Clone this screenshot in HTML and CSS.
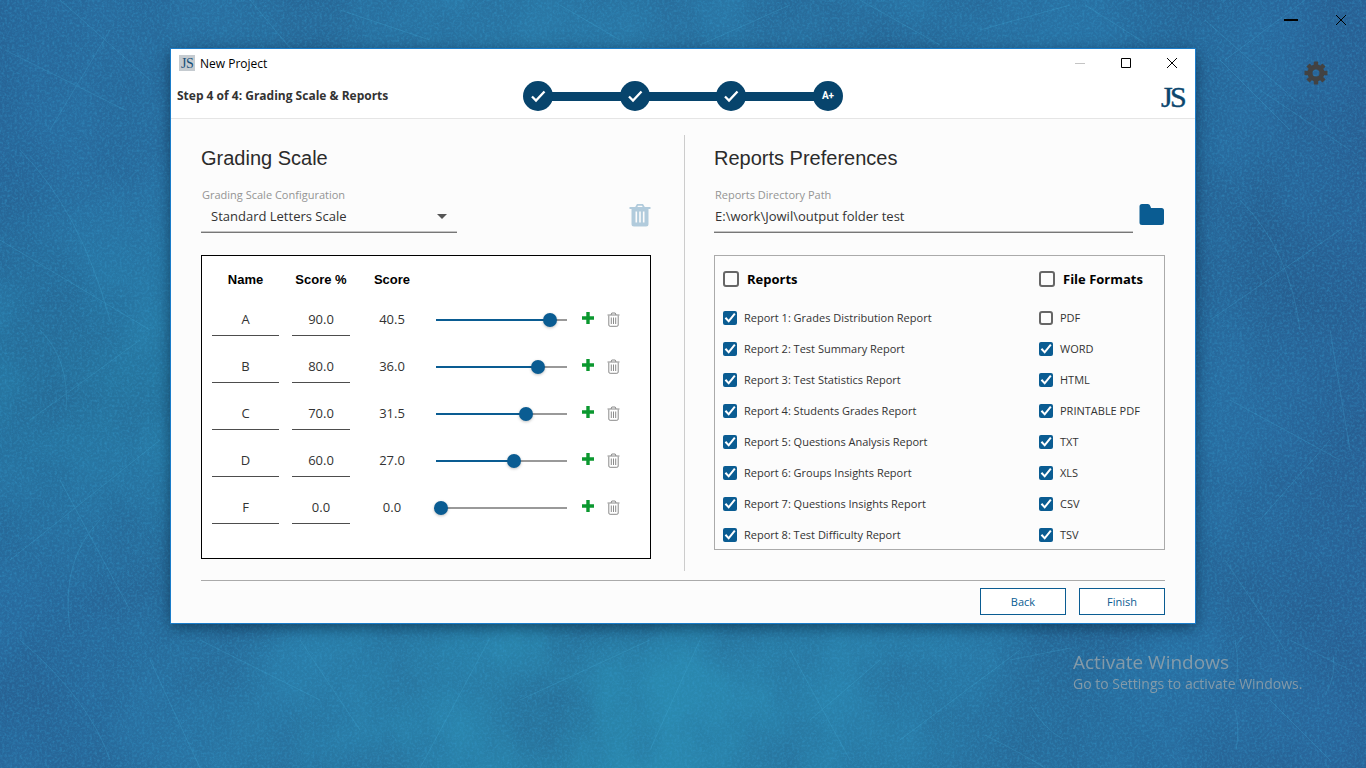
FILE: index.html
```html
<!DOCTYPE html>
<html lang="en">
<head>
<meta charset="utf-8">
<title>New Project</title>
<link rel="stylesheet" href="styles.css">
</head>
<body>
<svg class="sprites" aria-hidden="true">
  <symbol id="tick" viewBox="0 0 30 30"><path d="M9 15.500l4 4 8.500-9" fill="none" stroke="#fff" stroke-width="2.300"/></symbol>
  <symbol id="bin" viewBox="0 0 13 15"><path d="M.5 3h12M4 3l.8-2h3.400l.8 2M1.800 3.500v9.500q0 1.300 1.300 1.300h6.800q1.300 0 1.300-1.300v-9.500M4.300 5.500v6.500M6.500 5.500v6.500M8.700 5.500v6.500" fill="none" stroke="#8a8a8a"/></symbol>
  <symbol id="plus" viewBox="0 0 12 12"><path d="M4.300 0h3.400v4.300h4.300v3.400h-4.300v4.300h-3.400v-4.300h-4.300v-3.400h4.300z" fill="#0b982f"/></symbol>
</svg>
<svg class="wallpaper" viewBox="0 0 1366 768" preserveAspectRatio="xMidYMid slice" aria-hidden="true">
  <filter id="grain" x="0" y="0" width="100%" height="100%" color-interpolation-filters="sRGB"><feTurbulence type="fractalNoise" baseFrequency=".4" numOctaves="3" seed="4"/><feColorMatrix values="0 0 0 0 .2  0 0 0 0 .6  0 0 0 0 .8  1 0 0 0 -.42"/></filter>
  <filter id="shade" x="0" y="0" width="100%" height="100%" color-interpolation-filters="sRGB"><feTurbulence type="fractalNoise" baseFrequency=".008 .006" numOctaves="7" seed="9"/><feColorMatrix values="0 0 0 0 .14  0 0 0 0 .32  0 0 0 0 .5  0 .9 0 0 -.3"/></filter>
  <rect width="1366" height="768" filter="url(#shade)"/>
  <rect width="1366" height="768" filter="url(#grain)"/>
  <g class="scratches">
    <path d="M60 0l90 80M110 30l-60 100M20 150q60 60 90 170M0 240l150 90M30 420l110-80M60 480l70 130M10 560l150-120M20 640q70 60 90 120M150 660l50 108M200 640l120 60M300 640l60 90M420 768l70-130M520 700l130-60M700 640l-50 110M790 650l60 110M880 660l-70 60M985 735q40 20 60 33M1030 705q15 25 33 34M1010 660l60-12M900 740l120-90"/>
    <path d="M1235 640q5 25 0 50M1235 710q5 18 1 40M1243 636l-8 12M1333 655q4 20-8 40M1205 20l90 80M1220 60l70 70M1260 90l90 60M1305 0l-80 60M1240 200q50 50 60 130M1210 320l130-90M1230 400l110 60M1260 520l70-80M1225 560l60 90M1330 330l20 120M1290 640l60 30M1270 700l60 60M250 0l40 48M340 10l90 30M560 5l60 35M700 45l90-40M860 0l80 45M980 30l90-25M1085 5l60 38M5 50l120 60M40 330q30 30 26 80M100 520q-40 40-30 110"/>
  </g>
</svg>
<div class="desktop">
  <main class="window">
    <header class="window-head">
      <div class="titlebar">
        <svg class="app-icon" viewBox="0 0 16 20" aria-hidden="true"><path d="M0 2h16v16h-16z" fill="#c5cbd0"/><text x="2" y="15" font-size="14" fill="#174f78">J</text><text x="7" y="15" font-size="14" fill="#174f78">S</text></svg>
        <h1 class="title">New Project</h1>
        <div class="win-buttons">
          <button class="win-button" aria-label="Minimize" disabled><svg width="12" height="12"><path d="M1 6.500h10" stroke="#c4c4c4"/></svg></button>
          <button class="win-button" aria-label="Maximize"><svg width="12" height="12"><path d="M1.500 1.500h9v9h-9z" fill="none" stroke="#000"/></svg></button>
          <button class="win-button" aria-label="Close"><svg width="12" height="12"><path d="M1 1l10 10M11 1l-10 10" stroke="#000"/></svg></button>
        </div>
      </div>
      <div class="progress">
        <p class="step-label">Step 4 of 4: Grading Scale &amp; Reports</p>
        <ol class="stepper">
          <li class="step"><svg width="30" height="30"><use href="#tick"/></svg></li>
          <li class="step"><svg width="30" height="30"><use href="#tick"/></svg></li>
          <li class="step"><svg width="30" height="30"><use href="#tick"/></svg></li>
          <li class="step">A+</li>
        </ol>
        <svg class="logo" viewBox="0 0 26 38" role="img" aria-label="JS"><g fill="#0b466e" stroke="#0b466e" stroke-width=".4" font-size="30"><text x="0" y="30">J</text><text x="9" y="30">S</text></g></svg>
      </div>
    </header>

    <div class="panels">
      <section class="panel">
        <h2 class="heading">Grading Scale</h2>
        <div class="control-row">
          <div class="field scale-field">
            <label class="label" for="scale">Grading Scale Configuration</label>
            <div class="select-box">
              <select class="control select" id="scale"><option>Standard Letters Scale</option></select>
              <svg class="caret" width="10" height="5" aria-hidden="true"><path d="M0 0h10l-5 5z" fill="#555"/></svg>
            </div>
          </div>
          <button class="icon-button" aria-label="Delete scale"><svg width="22" height="24" viewBox="0 0 22 24"><path d="M7 4.500l1.500-2.700h5l1.500 2.700" fill="none" stroke="#b1cbdc" stroke-width="1.800"/><path d="M.5 4h21v2h-21zM2.500 6h17v15q0 2.500-2.500 2.500h-12q-2.500 0-2.500-2.500z" fill="#b1cbdc"/><path d="M7.300 8.500v11M11 8.500v11M14.700 8.500v11" stroke="#fcfcfc" stroke-width="1.600"/></svg></button>
        </div>
        <div class="scale-box">
          <table class="scale-table">
            <colgroup><col class="col-name"><col class="col-percent"><col class="col-score"><col class="col-slider"><col class="col-add"><col></colgroup>
            <thead><tr><th>Name</th><th>Score %</th><th>Score</th><td></td><td></td><td></td></tr></thead>
            <tbody>
              <tr><td><input class="cell-input name-input" value="A" aria-label="Name"></td><td><input class="cell-input percent-input" value="90.0" aria-label="Score %"></td><td class="score-cell">40.5</td><td><input class="slider" type="range" value="90" style="--value:90" aria-label="Score slider"></td><td class="add-cell"><button class="mini-button" aria-label="Add"><svg width="12" height="12"><use href="#plus"/></svg></button></td><td class="bin-cell"><button class="mini-button" aria-label="Delete"><svg width="13" height="15"><use href="#bin"/></svg></button></td></tr>
              <tr><td><input class="cell-input name-input" value="B" aria-label="Name"></td><td><input class="cell-input percent-input" value="80.0" aria-label="Score %"></td><td class="score-cell">36.0</td><td><input class="slider" type="range" value="80" style="--value:80" aria-label="Score slider"></td><td class="add-cell"><button class="mini-button" aria-label="Add"><svg width="12" height="12"><use href="#plus"/></svg></button></td><td class="bin-cell"><button class="mini-button" aria-label="Delete"><svg width="13" height="15"><use href="#bin"/></svg></button></td></tr>
              <tr><td><input class="cell-input name-input" value="C" aria-label="Name"></td><td><input class="cell-input percent-input" value="70.0" aria-label="Score %"></td><td class="score-cell">31.5</td><td><input class="slider" type="range" value="70" style="--value:70" aria-label="Score slider"></td><td class="add-cell"><button class="mini-button" aria-label="Add"><svg width="12" height="12"><use href="#plus"/></svg></button></td><td class="bin-cell"><button class="mini-button" aria-label="Delete"><svg width="13" height="15"><use href="#bin"/></svg></button></td></tr>
              <tr><td><input class="cell-input name-input" value="D" aria-label="Name"></td><td><input class="cell-input percent-input" value="60.0" aria-label="Score %"></td><td class="score-cell">27.0</td><td><input class="slider" type="range" value="60" style="--value:60" aria-label="Score slider"></td><td class="add-cell"><button class="mini-button" aria-label="Add"><svg width="12" height="12"><use href="#plus"/></svg></button></td><td class="bin-cell"><button class="mini-button" aria-label="Delete"><svg width="13" height="15"><use href="#bin"/></svg></button></td></tr>
              <tr><td><input class="cell-input name-input" value="F" aria-label="Name"></td><td><input class="cell-input percent-input" value="0.0" aria-label="Score %"></td><td class="score-cell">0.0</td><td><input class="slider" type="range" value="0" style="--value:0" aria-label="Score slider"></td><td class="add-cell"><button class="mini-button" aria-label="Add"><svg width="12" height="12"><use href="#plus"/></svg></button></td><td class="bin-cell"><button class="mini-button" aria-label="Delete"><svg width="13" height="15"><use href="#bin"/></svg></button></td></tr>
            </tbody>
          </table>
        </div>
      </section>

      <div class="divider"></div>

      <section class="panel panel-reports">
        <h2 class="heading">Reports Preferences</h2>
        <div class="control-row">
          <div class="field path-field">
            <label class="label" for="path">Reports Directory Path</label>
            <input class="control" id="path" value="E:\work\Jowil\output folder test">
          </div>
          <button class="icon-button" aria-label="Choose folder"><svg width="26" height="24" viewBox="0 0 26 24"><path d="M3 1h6q2 0 2.500 2.500l.5 1.500h10.500q2.500 0 2.500 2.500v12q0 2.500-2.500 2.500h-19.500q-2.500 0-2.500-2.500v-16q0-2.500 2.500-2.500z" fill="#0a5c92"/></svg></button>
        </div>
        <div class="report-box">
          <div class="group">
            <label class="check check-all"><input class="box" type="checkbox">Reports</label>
            <ul class="checks">
              <li><label class="check"><input class="box" type="checkbox" checked>Report 1: Grades Distribution Report</label></li>
              <li><label class="check"><input class="box" type="checkbox" checked>Report 2: Test Summary Report</label></li>
              <li><label class="check"><input class="box" type="checkbox" checked>Report 3: Test Statistics Report</label></li>
              <li><label class="check"><input class="box" type="checkbox" checked>Report 4: Students Grades Report</label></li>
              <li><label class="check"><input class="box" type="checkbox" checked>Report 5: Questions Analysis Report</label></li>
              <li><label class="check"><input class="box" type="checkbox" checked>Report 6: Groups Insights Report</label></li>
              <li><label class="check"><input class="box" type="checkbox" checked>Report 7: Questions Insights Report</label></li>
              <li><label class="check"><input class="box" type="checkbox" checked>Report 8: Test Difficulty Report</label></li>
            </ul>
          </div>
          <div class="group formats">
            <label class="check check-all"><input class="box" type="checkbox">File Formats</label>
            <ul class="checks">
              <li><label class="check"><input class="box" type="checkbox">PDF</label></li>
              <li><label class="check"><input class="box" type="checkbox" checked>WORD</label></li>
              <li><label class="check"><input class="box" type="checkbox" checked>HTML</label></li>
              <li><label class="check"><input class="box" type="checkbox" checked>PRINTABLE PDF</label></li>
              <li><label class="check"><input class="box" type="checkbox" checked>TXT</label></li>
              <li><label class="check"><input class="box" type="checkbox" checked>XLS</label></li>
              <li><label class="check"><input class="box" type="checkbox" checked>CSV</label></li>
              <li><label class="check"><input class="box" type="checkbox" checked>TSV</label></li>
            </ul>
          </div>
        </div>
      </section>
    </div>

    <footer class="actions">
      <button class="action">Back</button>
      <button class="action">Finish</button>
    </footer>
  </main>

  <aside class="desk-tools">
    <div class="desk-buttons">
      <button class="win-button" aria-label="Minimize application"><svg width="14" height="14"><path d="M0 7h14" stroke="#000" stroke-width="2"/></svg></button>
      <button class="win-button" aria-label="Close application"><svg width="12" height="12"><path d="M1 1l10 10M11 1l-10 10" stroke="#000"/></svg></button>
    </div>
    <button class="gear" aria-label="Settings"><svg width="24" height="24" viewBox="-12 -12 24 24"><g fill="none" stroke="#424242"><circle r="6" stroke-width="5"/><path d="M0-11.500v4M0 11.500v-4M-11.500 0h4M11.500 0h-4M-8-8l3 3M8-8l-3 3M-8 8l3-3M8 8l-3-3" stroke-width="4.500"/></g></svg></button>
  </aside>
</div>
<div class="watermark"><p class="watermark-title">Activate Windows</p><p class="watermark-text">Go to Settings to activate Windows.</p></div>
</body>
</html>
```
FILE: styles.css
```css
* { box-sizing: border-box; }
body, h1, h2, p, ol, ul { margin: 0; padding: 0; }
ol, ul { list-style: none; }
body {
  position: relative;
  min-height: 100vh;
  font: 12px/16px "Open Sans", "Noto Sans", sans-serif;
  color: #333;
  background:
    radial-gradient(ellipse at 45% 95%, #2a8bb0 0, transparent 50%),
    radial-gradient(ellipse at 10% 50%, #2780a9 0, transparent 40%),
    linear-gradient(90deg, #286a9e, #2a7aa8 40%, #2870a3 85%, #29649a);
}
button, input, select { font: inherit; color: inherit; }
button { border: 0; padding: 0; background: none; }
svg { display: block; }
.sprites { position: absolute; width: 0; height: 0; }
.wallpaper { position: absolute; inset: 0; width: 100%; height: 100%; }
.scratches { fill: none; stroke: #45b0dc; stroke-width: 1; opacity: .25; }

.desktop {
  position: relative;
  display: grid;
  grid-template-columns: minmax(0, 1fr) 170px;
  align-items: start;
  padding-left: 170px;
}
.window {
  margin-top: 48px;
  border: 1px solid #1a7cc9;
  background: #fcfcfc;
  box-shadow: 0 4px 14px rgba(0, 25, 50, .55);
}
.window-head { background: #fff; border-bottom: 1px solid #e5e5e5; }
.titlebar { display: flex; align-items: center; height: 28px; padding-left: 8px; }
.app-icon { width: 16px; height: 20px; margin-right: 5px; font-family: "Liberation Serif", serif; }
.title { padding-top: 1px; font-size: 12px; font-weight: 400; color: #000; }
.win-buttons { display: flex; margin-left: auto; }
.win-button { display: flex; align-items: center; justify-content: center; width: 46px; height: 28px; }

.progress { display: grid; grid-template-columns: 1fr 320px 1fr; align-items: center; height: 41px; padding: 0 8px 3px; }
.step-label { margin-left: -2px; font-weight: 700; }
.stepper { display: flex; justify-content: space-between; background: linear-gradient(#07446c, #07446c) center / 300px 9px no-repeat; }
.step {
  display: grid;
  place-items: center;
  width: 30px;
  height: 30px;
  border-radius: 50%;
  background: #07446c;
  color: #fff;
  font: 700 10px/30px Roboto, sans-serif;
}
.logo { justify-self: end; width: 26px; height: 38px; font-family: "Liberation Serif", serif; }

.panels { display: flex; padding: 16px 30px 0; }
.panel { flex: 1 1 0; min-width: 0; padding: 11px 0 12px; }
.panel-reports { flex-basis: 1px; }
.divider { flex: none; width: 1px; margin: 0 29px 0 33px; background: #ccc; }
.heading { font: 400 20px/24px "Liberation Sans", Arial, sans-serif; color: #2b2b2b; }
.control-row { display: flex; align-items: center; justify-content: space-between; margin: 17px 0 22px; }
.field { display: flex; flex-direction: column; }
.label { padding-left: 1px; font-size: 11px; color: #949494; }
.scale-field { width: 256px; }
.path-field { flex: 1; margin-right: 6px; }
.control {
  appearance: none;
  width: 100%;
  height: 30px;
  padding: 0 0 3px 1px;
  border: 0;
  border-bottom: 1px solid #777;
  border-radius: 0;
  background: none;
  box-shadow: inset 0 -1px #c4c4c4;
  font-size: 13px;
  outline: 0;
}
.select-box { display: grid; align-items: center; }
.select-box > * { grid-area: 1 / 1; }
.select { padding-left: 10px; }
.caret { justify-self: end; margin: 0 10px 4px 0; pointer-events: none; }
.icon-button { align-self: end; padding-bottom: 6px; }

.scale-box { height: 304px; border: 1px solid #000; background: #fff; overflow: auto; }
.scale-table { width: 100%; table-layout: fixed; border-collapse: collapse; font-size: 13px; text-align: center; }
.col-name { width: 87px; }
.col-percent { width: 64px; }
.col-score { width: 78px; }
.col-slider { width: 141px; }
.col-add { width: 32px; }
.scale-table th, .scale-table td { padding: 0; vertical-align: middle; }
.scale-table th { height: 40px; padding-top: 7px; color: #000; font-family: "Liberation Sans", Arial, sans-serif; }
.scale-table tbody tr { height: 47px; }
.scale-table .score-cell { padding-bottom: 2px; }
.scale-table .add-cell { padding-bottom: 3px; }
.cell-input {
  display: block;
  height: 33px;
  margin: 0 auto;
  padding: 0;
  border: 0;
  border-bottom: 1px solid #4d4d4d;
  background: none;
  text-align: center;
  outline: 0;
}
.name-input { width: 67px; }
.percent-input { width: 58px; }
.slider {
  appearance: none;
  display: block;
  width: 135px;
  height: 14px;
  margin: 1px auto 0;
  background: linear-gradient(90deg, #0a5c92 calc(var(--value) * 1%), #999 0) center / 131px 2px no-repeat;
}
.slider::-webkit-slider-thumb {
  appearance: none;
  width: 14px;
  height: 14px;
  border-radius: 50%;
  background: #0a5c92;
  box-shadow: 0 1px 3px rgba(0, 0, 0, .25);
}
.mini-button { display: block; margin: 0 auto; }
.mini-button svg { margin: 0 auto; }
.bin-cell .mini-button { margin: 0 0 0 3px; }

.report-box { display: flex; justify-content: space-between; padding: 13px 0 4px 8px; border: 1px solid #aaa; }
.formats { width: 125px; }
.check { display: flex; align-items: center; gap: 7px; height: 20px; font-size: 11px; white-space: nowrap; }
.check-all { gap: 8px; font-size: 13px; font-weight: 700; color: #000; }
.checks { display: grid; gap: 11px; margin-top: 19px; }
.box {
  appearance: none;
  flex: none;
  display: grid;
  width: 14px;
  height: 14px;
  margin: 0;
  border: 2px solid #666;
  border-radius: 3px;
}
.check-all .box { width: 16px; height: 16px; }
.box:checked { border: 0; border-radius: 2px; background: #0a5c92; }
.box:checked::before {
  content: "";
  background: #fff;
  clip-path: polygon(12% 53%, 23% 43%, 40% 62%, 79% 14%, 90% 24%, 41% 84%);
}

.actions { display: flex; justify-content: flex-end; gap: 13px; margin: 9px 30px 0; padding: 7px 0 8px; border-top: 1px solid #aaa; }
.action { width: 86px; height: 27px; border: 1px solid #0a5c92; background: #fff; color: #0a5c92; font-size: 11px; }

.desk-tools { display: flex; flex-direction: column; align-items: flex-end; padding: 6px 2px 0 0; }
.desk-buttons { display: flex; gap: 4px; }
.gear { margin: 27px 36px 0 0; }
.watermark { position: absolute; right: 57px; bottom: 74px; width: 236px; color: #9aa5ab; opacity: .8; white-space: nowrap; }
.watermark-title { font-size: 19px; line-height: 24px; }
.watermark-text { font-size: 14px; line-height: 20px; }
```
